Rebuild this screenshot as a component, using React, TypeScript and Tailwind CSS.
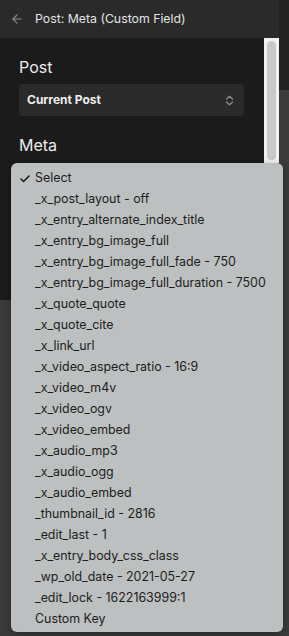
import { ArrowLeft, Check } from 'lucide-react'

const items = [
  '_x_post_layout - off',
  '_x_entry_alternate_index_title',
  '_x_entry_bg_image_full',
  '_x_entry_bg_image_full_fade - 750',
  '_x_entry_bg_image_full_duration - 7500',
  '_x_quote_quote',
  '_x_quote_cite',
  '_x_link_url',
  '_x_video_aspect_ratio - 16:9',
  '_x_video_m4v',
  '_x_video_ogv',
  '_x_video_embed',
  '_x_audio_mp3',
  '_x_audio_ogg',
  '_x_audio_embed',
  '_thumbnail_id - 2816',
  '_edit_last - 1',
  '_x_entry_body_css_class',
  '_wp_old_date - 2021-05-27',
  '_edit_lock - 1622163999:1',
  'Custom Key',
]

function UpDown() {
  return (
    <svg width="9" height="11" viewBox="0 0 9 11" fill="none" stroke="#8a8a8a" strokeWidth="1.4" strokeLinecap="round" strokeLinejoin="round">
      <path d="M1.5 4 L4.5 1.2 L7.5 4" />
      <path d="M1.5 7 L4.5 9.8 L7.5 7" />
    </svg>
  )
}

export default function App() {
  return (
    <div
      className="relative w-[289px] h-[636px] overflow-hidden bg-[#3a3a3a] flex"
      style={{ fontFamily: 'Inter, "Noto Sans", sans-serif' }}
    >
      <div className="w-[279px] flex flex-col">
        <div className="h-[38px] bg-[#2a2a2a] flex items-center gap-[11px] pl-[10px]">
          <ArrowLeft className="w-[14px] h-[14px] text-[#8c8c8c]" strokeWidth={2} />
          <span className="text-[12.3px] text-[#e4e4e4]">Post: Meta (Custom Field)</span>
        </div>
        <div className="h-[262px] bg-[#1b1b1b] flex">
          <div className="flex-1 pl-[19px] pr-[20px] pt-[18px]">
            <div className="text-[16px] text-[#ececec] leading-[22px]">Post</div>
            <div className="mt-[6px] h-[32px] rounded-[4px] bg-[#2a2a2a] flex items-center justify-between pl-[8px] pr-[10px]">
              <span className="text-[12px] font-bold text-[#f0f0f0]">Current Post</span>
              <UpDown />
            </div>
            <div className="mt-[18px] text-[16px] text-[#ececec] leading-[22px]">Meta</div>
          </div>
          <div className="w-[15px] h-[125px] bg-[#f2f2f2] pl-[3px] pr-[3px] py-[3px]">
            <div className="h-full rounded-full bg-[#c9c9c9]" />
          </div>
        </div>
      </div>
      <div className="w-[10px] flex flex-col">
        <div className="h-[90px] bg-[#222222]" />
        <div className="flex-1 bg-[#3b3b3b]" />
      </div>

      <div className="absolute left-[11px] top-[163px] w-[272px] h-[469px] rounded-[6px] bg-[#bdc0c0] pt-[5px] shadow-[0_2px_8px_rgba(0,0,0,0.3)]">
        <div className="h-[21px] flex items-center pl-[8px] text-[12.4px] text-[#1c1c1c]">
          <Check className="w-[12px] h-[12px] mr-[4px]" strokeWidth={3.2} />
          <span>Select</span>
        </div>
        {items.map((item) => (
          <div key={item} className="h-[21px] flex items-center pl-[24px] text-[12.4px] text-[#1c1c1c] whitespace-nowrap">
            {item}
          </div>
        ))}
      </div>
    </div>
  )
}
